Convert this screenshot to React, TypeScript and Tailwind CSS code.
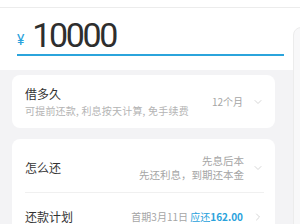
import { ChevronDown, ChevronRight } from "lucide-react";

const FONT = { fontFamily: '"Noto Sans CJK SC", "Noto Sans", sans-serif' };

export default function App() {
  return (
    <div
      className="relative flex h-[224px] w-[300px] flex-col overflow-hidden bg-[#f3f3f5]"
      style={FONT}
    >
      {/* amount */}
      <header className="h-[70px] shrink-0 bg-white">
        <div className="h-[8px] border-b border-[#ececec]" />
        <div className="flex h-[44px] items-end pl-[17px]">
          <span
            className="mb-[5px] text-[14px] leading-none text-[#2aa2dc]"
            style={{ fontFamily: "Roboto, sans-serif" }}
          >
            ¥
          </span>
          <span
            className="ml-[8px] text-[34px] leading-none tracking-[-2.4px] text-[#2e2e2e]"
            style={{ fontFamily: "Roboto, sans-serif" }}
          >
            10000
          </span>
        </div>
        <div className="ml-[17px] mt-[2px] h-[2px] w-[267px] bg-[#2ba4dc]" />
      </header>

      <main className="flex w-[275px] flex-col gap-[11px] pl-3 pt-[5px]">
        <section className="flex h-[53px] items-center rounded-lg bg-white pl-[13px] pr-[11px]">
          <div className="flex-1">
            <p className="text-[12px] leading-[16px] text-[#333]">借多久</p>
            <p className="mt-[2px] text-[10px] leading-[13px] tracking-[0.2px] text-[#b4b4b4]">
              可提前还款, 利息按天计算, 免手续费
            </p>
          </div>
          <span className="text-[10px] text-[#a5a5a5]">12个月</span>
          <ChevronDown className="ml-[9px] size-[12px] text-[#c8c8c8]" strokeWidth={1.5} />
        </section>

        <section className="flex flex-col rounded-lg bg-white px-[13px] pr-[11px]">
          <div className="flex h-[53px] items-center pt-[4px]">
            <p className="flex-1 pt-[1px] text-[12px] text-[#333]">怎么还</p>
            <div className="text-right text-[10.5px] leading-[14px] text-[#a5a5a5]">
              <p>先息后本</p>
              <p>先还利息，到期还本金</p>
            </div>
            <ChevronDown className="ml-[8px] size-[12px] text-[#c8c8c8]" strokeWidth={1.5} />
          </div>
          <div className="h-px bg-[#f0f0f0]" />
          <div className="flex h-[50px] items-start pt-[16px]">
            <p className="flex-1 text-[12px] leading-[16px] text-[#333]">还款计划</p>
            <p className="text-[10px] leading-[16px] text-[#a5a5a5]">
              首期3月11日 <span className="text-[#2aa2dc]">应还</span>
              <span className="font-bold text-[#2aa2dc]">162.00</span>
            </p>
            <ChevronRight className="ml-[9px] mt-[2px] size-[12px] text-[#c8c8c8]" strokeWidth={1.5} />
          </div>
        </section>
      </main>

      {/* next page peeking in at the right edge */}
      <div className="absolute -bottom-4 left-[293px] top-[27px] w-[20px] rounded-tl-lg border border-[#ececec] bg-[#f8f8f9]" />
    </div>
  );
}
